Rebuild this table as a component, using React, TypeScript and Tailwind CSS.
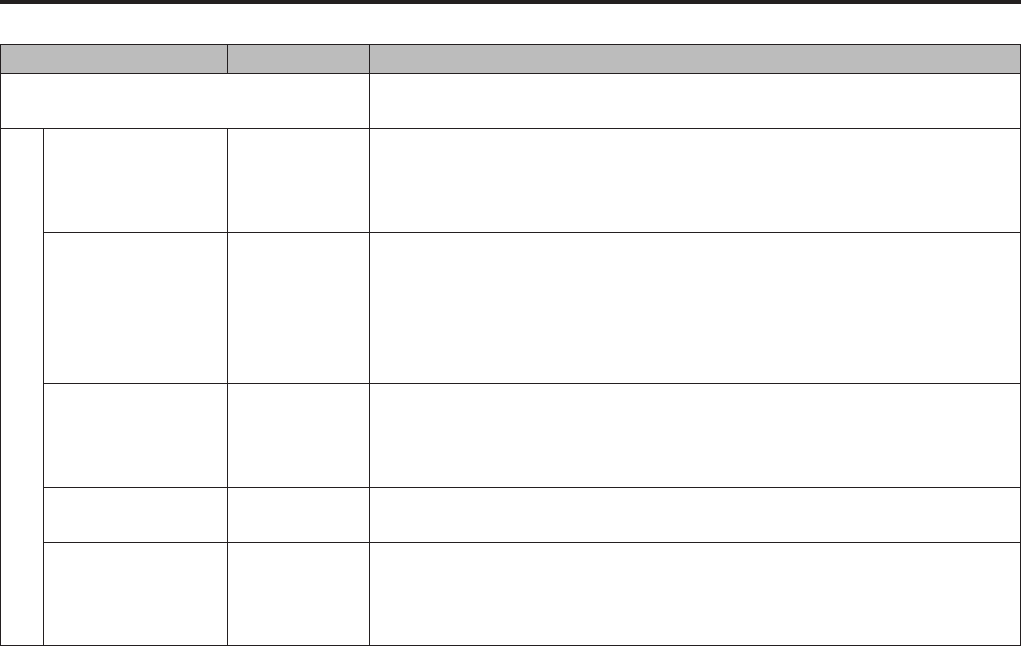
import React from "react";

const cell = "border-r border-b border-[#231f20]";

const rows = [104, 151, 104, 55, 103];

const App: React.FC = () => {
  return (
    <div className="h-[646px] w-[1021px] overflow-hidden bg-white">
      {/* top rule */}
      <div className="h-[4px] w-full bg-[#231f20]" />

      {/* table frame */}
      <div className="mt-[40px] grid w-[1021px] grid-cols-[43px_184px_142px_651px] grid-rows-[29px_55px_104px_151px_104px_55px_103px] border-l border-t border-[#231f20]">
        {/* header */}
        <div className={`col-span-2 bg-[#bcbcbc] ${cell}`} />
        <div className={`bg-[#bcbcbc] ${cell}`} />
        <div className={`bg-[#bcbcbc] ${cell}`} />

        {/* spanning row */}
        <div className={`col-span-3 ${cell}`} />
        <div className={cell} />

        {/* indent column */}
        <div className={`col-start-1 row-span-5 row-start-3 ${cell}`} />

        {rows.map((h, i) => (
          <React.Fragment key={h + "-" + i}>
            <div className={`col-start-2 ${cell}`} />
            <div className={cell} />
            <div className={cell} />
          </React.Fragment>
        ))}
      </div>
    </div>
  );
};

export default App;
